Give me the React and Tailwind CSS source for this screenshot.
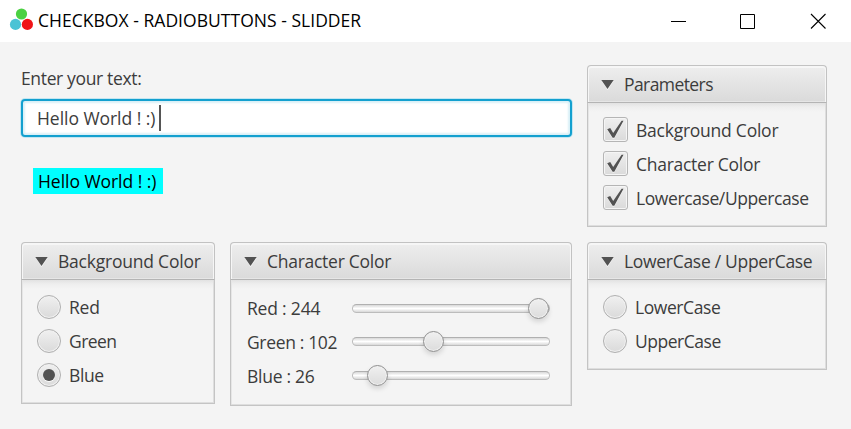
import React from "react";

function Panel({ title, titleClass, className, children }) {
  return (
    <section className={`relative flex shrink-0 flex-col ${className}`}>
      <header className="flex h-[38px] shrink-0 items-center rounded-t-[4px] border border-[#c2c2c2] border-b-[#b4b4b4] bg-linear-to-b from-[#eeeeee] to-[#dadada] pl-[13px] shadow-[inset_0_1px_0_1px_#f6f6f6,inset_0_0_0_1px_#e6e6e6]">
        <svg className="shrink-0" width="14" height="12" viewBox="0 0 14 12">
          <path d="M.6 3h12L6.6 12z" fill="#fafafa" />
          <path d="M.3 1.9h12.4L6.5 11z" fill="#525252" />
        </svg>
        <h2 className={`ml-[9px] whitespace-nowrap ${titleClass}`}>{title}</h2>
      </header>
      <div className="flex-1 border border-t-0 border-[#c4c4c4] bg-[linear-gradient(#e2e2e2,#eeeeee_4px,#f4f4f4_9px)] shadow-[inset_-1px_-1px_0_#dedede,inset_1px_0_0_#e6e6e6]">
        {children}
      </div>
    </section>
  );
}

function Check({ label, className }) {
  return (
    <label className="flex h-[34px] items-center">
      <span className="flex size-[25px] shrink-0 items-center justify-center rounded-[3px] border-[1.5px] border-[#b5b5b5] bg-linear-to-b from-[#efefef] to-[#dadada] shadow-[inset_0_0_0_1px_#f5f5f5]">
        <svg width="19" height="19" viewBox="0 0 19 19">
          <path d="M1.2 9.2l3-1.2 3 5L15.6.8h1.9L8.3 17.8H6.6z" fill="#fafafa" transform="translate(0 .8)" />
          <path d="M1.2 9.2l3-1.2 3 5L15.6.8h1.9L8.3 17.8H6.6z" fill="#525252" />
        </svg>
      </span>
      <span className={`ml-2 mt-[1px] whitespace-nowrap ${className}`}>{label}</span>
    </label>
  );
}

function Radio({ label, className, checked }) {
  return (
    <label className="flex h-[34px] items-center">
      <span className="flex size-6 shrink-0 items-center justify-center rounded-full border border-[#b0b0b0] bg-linear-to-b from-[#f0f0f0] to-[#dadada] shadow-[inset_0_0_0_1px_#f0f0f0]">
        {checked && <span className="size-3 rounded-full bg-[#525252] shadow-[0_1px_0_#fafafa]" />}
      </span>
      <span className={`ml-2 whitespace-nowrap ${className}`}>{label}</span>
    </label>
  );
}

function Slider({ label, className, trackClass, value }) {
  return (
    <div className="flex h-[34px] items-center">
      <span className={`-mt-[2px] w-[105px] shrink-0 whitespace-nowrap ${className}`}>{label}</span>
      <div className={`relative h-[9px] w-[198px] rounded-full border border-[#bcbcbc] border-t-[#b0b0b0] bg-linear-to-b from-[#d8d8d8] via-[#ffffff] to-[#d8d8d8] ${trackClass}`}>
        <span
          className="absolute -top-[7px] size-[21px] rounded-full border border-[#8f8f8f] bg-linear-to-b from-[#f0f0f0] to-[#dcdcdc] shadow-[inset_0_0_0_1px_#f0f0f0,0_3px_5px_rgba(0,0,0,0.13)]"
          style={{ left: `${(value / 255) * 188.3 - 5.3}px` }}
        />
      </div>
    </div>
  );
}

export default function App() {
  return (
    <div className="h-[429px] w-[851px] overflow-hidden bg-[#f4f4f4] font-['Open_Sans','Noto_Sans',sans-serif] text-[17.5px] leading-[24px] text-[#3c3c3c]">
      <div className="flex h-[42px] items-center bg-white text-black">
        <svg className="-mt-[2px] ml-[9px] shrink-0" width="25" height="26" viewBox="0 0 25 26">
          <circle cx="12.5" cy="7" r="5.6" fill="#4bd142" />
          <circle cx="6.5" cy="17.4" r="5.6" fill="#4bc3d5" />
          <circle cx="18.4" cy="17.4" r="5.6" fill="#f01418" />
        </svg>
        <h1 className="-mt-[2px] ml-1 whitespace-nowrap tracking-[0.03px]">CHECKBOX - RADIOBUTTONS - SLIDDER</h1>
        <svg className="ml-auto mr-[24px] shrink-0" width="156" height="17" viewBox="0 0 156 17" stroke="#000" fill="none">
          <path d="M0 8.5h15" />
          <path d="M69.5 1.5h14v14h-14z" />
          <path d="M140 1l14.5 14.5M154.5 1L140 15.5" strokeWidth="1.1" />
        </svg>
      </div>
      <main className="flex gap-[15px] pl-[21px] pt-[23px]">
        <div className="flex w-[551px] flex-col">
          <div className="flex h-[177px] flex-col items-start pt-[1px]">
            <p className="whitespace-nowrap tracking-[-0.35px]">Enter your text:</p>
            <div className="mt-[9px] flex h-[38px] w-full items-center rounded-[4px] border-2 border-[#13a0cf] bg-white pl-[14px] shadow-[0_0_0_1px_#c4e6f1,inset_0_0_2px_2px_#d9f0f7]">
              <span className="whitespace-nowrap tracking-[-0.04px]">Hello World ! :)</span>
              <span className="ml-[4px] h-[26px] w-[2px] bg-[#555555]" />
            </div>
            <p className="ml-3 mt-[31px] h-[26px] w-[130px] whitespace-nowrap bg-[#00ffff] pl-[5px] pt-[1px] tracking-[-0.04px] text-black">Hello World ! :)</p>
          </div>
          <div className="flex items-start gap-[15px]">
            <Panel title="Background Color" titleClass="tracking-[-0.22px]" className="h-[162px] w-[194px]">
              <div className="pl-[15px] pt-[10px]">
                <Radio label="Red" className="tracking-[-0.2px]" />
                <Radio label="Green" className="tracking-[-0.55px]" />
                <Radio label="Blue" className="tracking-[-0.4px]" checked />
              </div>
            </Panel>
            <Panel title="Character Color" titleClass="tracking-[-0.27px]" className="h-[164px] w-[342px]">
              <div className="pl-4 pt-3">
                <Slider label="Red : 244" className="tracking-[-0.2px]" trackClass="-mt-[1px]" value={244} />
                <Slider label="Green : 102" className="tracking-[-0.35px]" trackClass="-mt-[3px]" value={102} />
                <Slider label="Blue : 26" className="tracking-[-0.27px]" trackClass="-mt-[3px]" value={26} />
              </div>
            </Panel>
          </div>
        </div>
        <div className="flex w-[240px] flex-col gap-[15px]">
          <Panel title="Parameters" titleClass="tracking-[-0.58px]" className="h-[162px] w-[240px]">
            <div className="pl-[15px] pt-[9px]">
              <Check label="Background Color" className="tracking-[-0.24px]" />
              <Check label="Character Color" className="tracking-[-0.27px]" />
              <Check label="Lowercase/Uppercase" className="tracking-[-0.4px]" />
            </div>
          </Panel>
          <Panel title="LowerCase / UpperCase" titleClass="tracking-[-0.3px]" className="h-[128px] w-[240px]">
            <div className="pl-[15px] pt-[10px]">
              <Radio label="LowerCase" className="tracking-[-0.42px]" />
              <Radio label="UpperCase" className="tracking-[-0.47px]" />
            </div>
          </Panel>
        </div>
      </main>
    </div>
  );
}
